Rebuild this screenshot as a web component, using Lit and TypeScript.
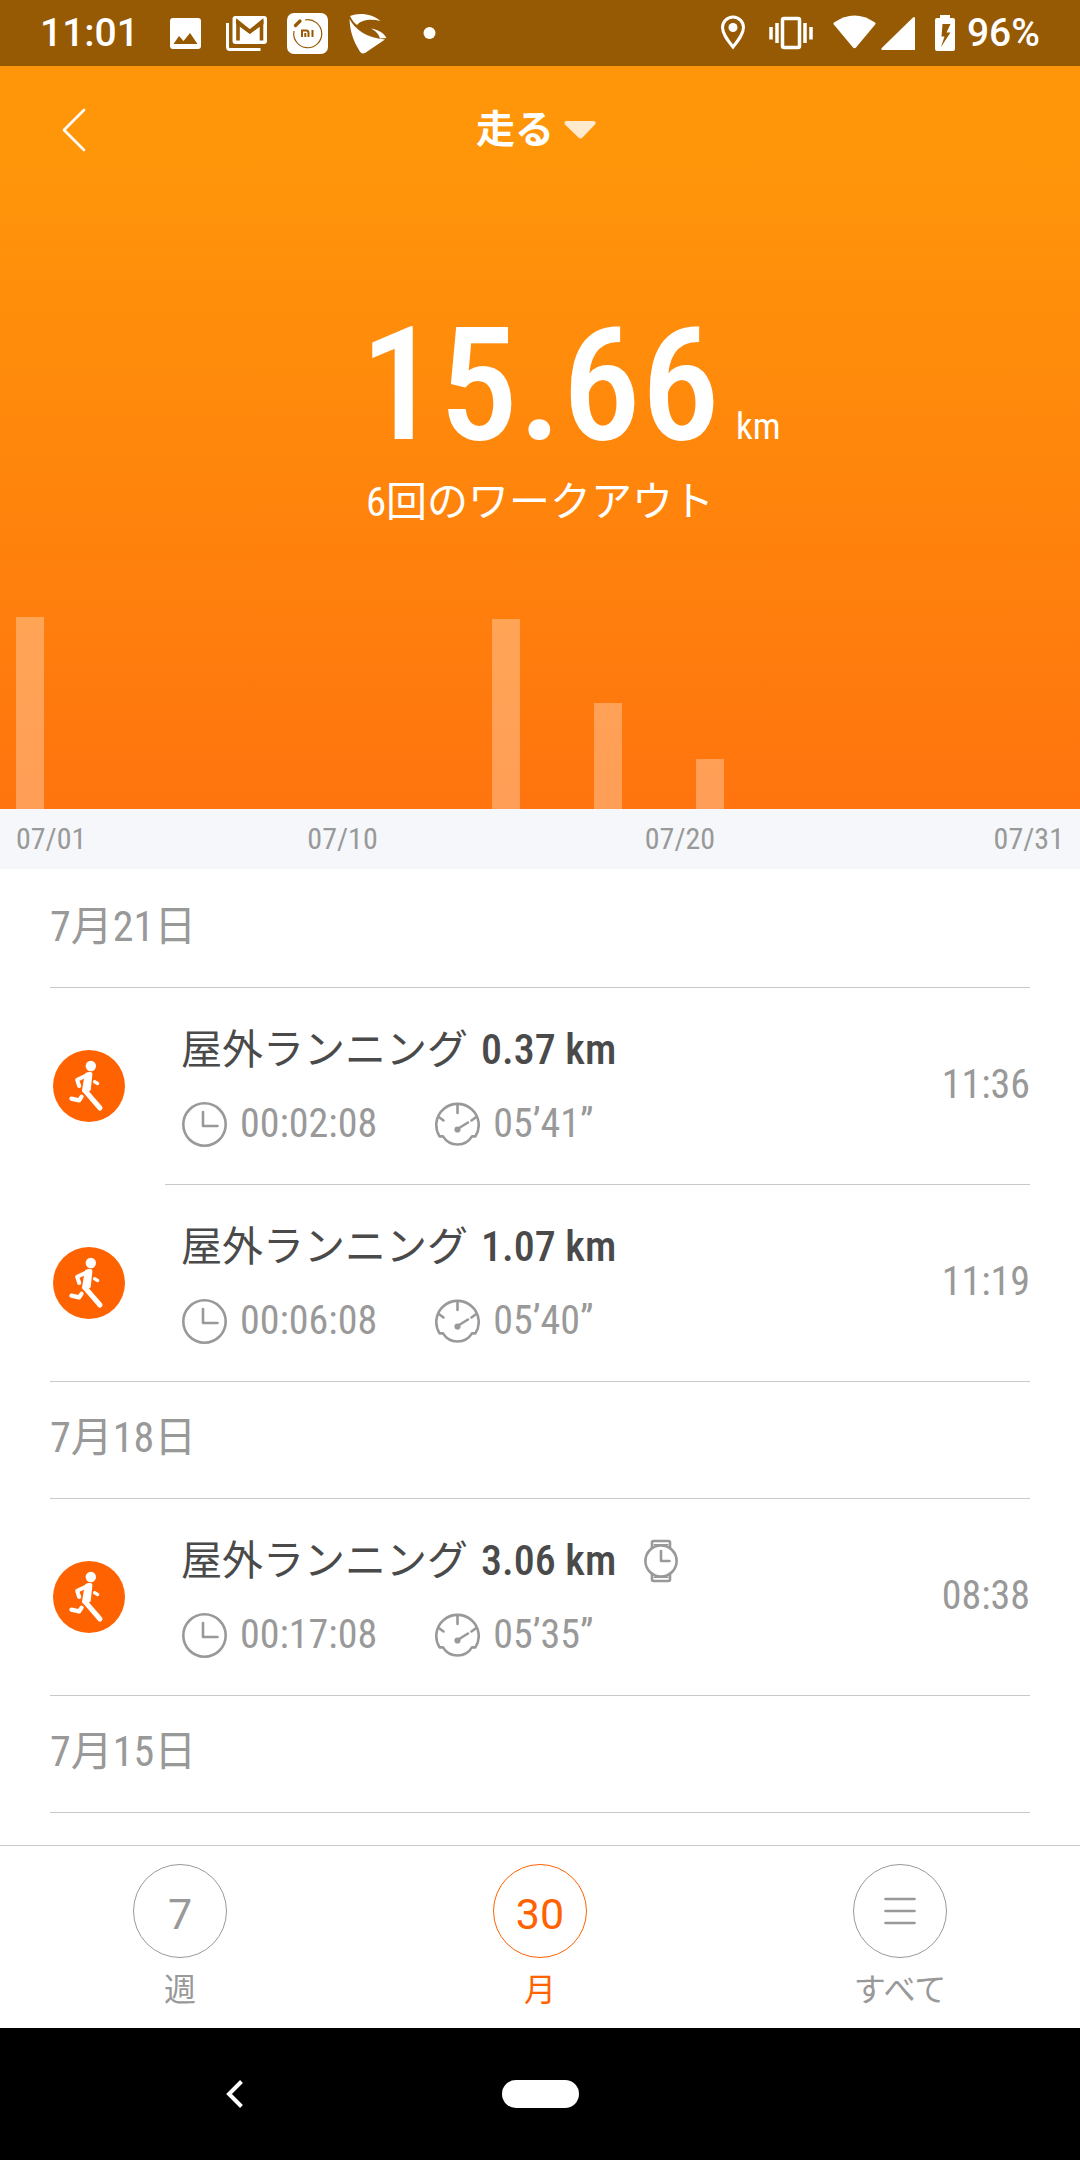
import { LitElement, html, css, svg, nothing } from "lit";
import { customElement, property, state } from "lit/decorators.js";
import { classMap } from "lit/directives/class-map.js";
import { styleMap } from "lit/directives/style-map.js";

interface Workout {
  distance: string;
  duration: string;
  pace: string;
  time: string;
  watch?: boolean;
}

interface Day {
  month: string;
  day: string;
  workouts: Workout[];
}

const DAYS: Day[] = [
  {
    month: "7",
    day: "21",
    workouts: [
      { distance: "0.37", duration: "00:02:08", pace: "05’41”", time: "11:36" },
      { distance: "1.07", duration: "00:06:08", pace: "05’40”", time: "11:19" },
    ],
  },
  {
    month: "7",
    day: "18",
    workouts: [
      { distance: "3.06", duration: "00:17:08", pace: "05’35”", time: "08:38", watch: true },
    ],
  },
  { month: "7", day: "15", workouts: [] },
];

// Share of the tallest bar, by day of the month.
const BARS: Record<number, number> = { 1: 100, 15: 99, 18: 55, 21: 26 };

const runnerIcon = html`<svg class="runner" viewBox="0 0 72 72" aria-hidden="true">
  <circle cx="36" cy="36" r="36" fill="#ff6200" />
  <g fill="none" stroke="#fff" stroke-linecap="round" stroke-linejoin="round">
    <circle cx="37.8" cy="16" r="5.2" fill="#fff" stroke="none" />
    <path d="M36.5 24 24.2 29.8 26.2 36.2" stroke-width="4" stroke-linecap="butt" />
    <path d="M26.2 35.4v.6" stroke-width="4" />
    <path d="M34 24.5 37.4 24 35.8 39.4 31 40.6 32.6 31Z" fill="#fff" stroke-width="4" />
    <path d="M41.6 31.8 44.6 33.4" stroke-width="3.4" />
    <path d="M32.6 41.4 47 58" stroke-width="5" />
    <path d="M18.4 48.6 26 50.4 28.6 46.8" stroke-width="4.2" />
  </g>
</svg>`;

const clockIcon = html`<svg class="metric-icon" viewBox="0 0 46 46" aria-hidden="true">
  <g fill="none" stroke="#999" stroke-width="2.6" stroke-linecap="round" stroke-linejoin="round">
    <circle cx="23.5" cy="23.5" r="21.2" />
    <path d="M22 11V25H36.500" />
  </g>
</svg>`;

const paceIcon = html`<svg class="metric-icon" viewBox="0 0 46 46" aria-hidden="true">
  <g fill="none" stroke="#999" stroke-width="2.6" stroke-linecap="round" stroke-linejoin="round">
    <path d="M9 35.400H5.600A21.200 21.200 0 1 1 41.400 35.400H38A17 17 0 0 1 9 35.400Z" />
    <path d="M23.500 3V12M5.500 16.500 9.500 19.500M41.500 16.500 37.500 19.500" />
    <path d="M23.500 28 34 21.500" />
    <circle cx="23.500" cy="28.500" r="1.800" fill="#999" />
  </g>
</svg>`;

const watchIcon = html`<svg class="watch" viewBox="0 0 36 44" role="img" aria-label="ウォッチ">
  <g fill="none" stroke="#999" stroke-width="2.6" stroke-linejoin="round" stroke-linecap="round">
    <circle cx="18" cy="22" r="15.6" />
    <path d="M9 9.200V3.500Q9 2 10.500 2H25.500Q27 2 27 3.500V9.200" />
    <path d="M9 34.800V40.500Q9 42 10.500 42H25.500Q27 42 27 40.500V34.800" />
    <path d="M11 5.500H25M11 38.500H25" stroke-width="1.200" />
    <path d="M18 12V22H26.500" />
  </g>
</svg>`;

@customElement("status-bar")
export class StatusBar extends LitElement {
  static styles = css`
    :host {
      display: flex;
      align-items: center;
      justify-content: space-between;
      height: 66px;
      padding: 0 40px;
      background: #965904;
      color: #fff;
      font: 500 39px/66px Roboto, "Liberation Sans", sans-serif;
    }
    .left,
    .right,
    .radio {
      display: flex;
      align-items: center;
    }
    .left {
      gap: 16px;
    }
    .clock {
      margin-right: 8px;
    }
    .right {
      gap: 20px;
    }
    .radio {
      gap: 5px;
    }
    .power {
      display: flex;
      align-items: center;
      gap: 12px;
    }
    svg {
      display: block;
      height: 44px;
    }
    .app {
      width: 45px;
    }
    .place {
      width: 32px;
    }
    .vibrate {
      width: 44px;
    }
    .wifi {
      width: 43px;
    }
    .cell {
      width: 34px;
    }
    .battery {
      width: 20px;
    }
  `;

  render() {
    return html`
      <div class="left">
        <span class="clock">11:01</span>
        <svg class="app" viewBox="0 0 45 44" aria-hidden="true">
          <path fill="#fff" fill-rule="evenodd" d="M10 7H35Q38 7 38 10V35Q38 38 35 38H10Q7 38 7 35V10Q7 7 10 7ZM10.500 33H34.500L27 22 20.500 30 16 25Z" />
        </svg>
        <svg class="app" viewBox="0 0 45 44" aria-hidden="true">
          <path fill="none" stroke="#fff" stroke-width="3" d="M3.500 12V36Q3.500 38.500 6 38.500H36.500" />
          <rect x="8.500" y="5" width="34.500" height="28" rx="3" fill="#fff" />
          <path fill="none" stroke="#965904" stroke-width="3.600" d="M14 29.500V11L25.800 20.500 37.500 11V29.500" />
          <path fill="#965904" d="M12 8.500 25.800 19 39.500 8.500V13L25.800 23 12 13Z" />
        </svg>
        <svg class="app" viewBox="0 0 45 44" aria-hidden="true">
          <rect x="2" y="2" width="41" height="41" rx="7" fill="#fff" />
          <g fill="none" stroke="#965904">
            <path stroke-width="1.200" d="M20 9A14 14 0 1 1 9 20" />
            <path stroke-width="3.200" stroke-linecap="round" d="M10.500 14.500 15 10" />
            <path stroke-width="2" d="M17 26V19.500H21.500Q23.500 19.500 23.500 22V26M20.300 22V26M27.500 19V26" />
          </g>
        </svg>
        <svg class="app" viewBox="0 0 45 44" aria-hidden="true">
          <path fill="#fff" d="M4 5C13 1 27 3 34.500 10 26 8 16 8 11 14 8 12 6 9 4 5Z" />
          <path fill="#fff" d="M3.500 8C9 18 20 27 39 28.500L19 42C16 43 14.500 42 13 39 7 29 4 20 3.500 8Z" />
          <path fill="#fff" d="M25 17.500C32 18.500 38 22 40.500 27L34 27.500C33 23 29.500 20 25 17.500Z" />
        </svg>
        <svg class="app" viewBox="0 0 45 44" aria-hidden="true">
          <circle cx="22.500" cy="22" r="6" fill="#fff" />
        </svg>
      </div>
      <div class="right">
        <svg class="place" viewBox="0 0 32 44" aria-hidden="true">
          <path fill="none" stroke="#fff" stroke-width="3" d="M16 36C10 28.500 5.500 22.500 5.500 16.500A10.500 10.500 0 0 1 26.500 16.500C26.500 22.500 22 28.500 16 36Z" />
          <circle cx="16" cy="16.500" r="4.500" fill="#fff" />
        </svg>
        <svg class="vibrate" viewBox="0 0 44 44" aria-hidden="true">
          <rect x="13.500" y="7.500" width="17" height="29" rx="1.500" fill="none" stroke="#fff" stroke-width="3.500" />
          <path stroke="#fff" stroke-width="3.500" d="M2 16V28.500M8 12V32M36 12V32M42 16V28.500" />
        </svg>
        <div class="radio">
          <svg class="wifi" viewBox="0 0 43 44" aria-hidden="true">
            <path fill="#fff" d="M.8 13.500Q0 12.500 1 11.500 21.500-2.500 42 11.500 43 12.500 42.200 13.500L23 36.500Q21.500 38 20 36.500Z" />
          </svg>
          <svg class="cell" viewBox="0 0 34 44" aria-hidden="true">
            <path fill="#fff" d="M32 6.500Q34 5 34 7.500V39H2Q-1 39 1 36.800Z" />
          </svg>
        </div>
        <div class="power">
          <svg class="battery" viewBox="0 0 20 44" aria-hidden="true">
            <path fill="#fff" fill-rule="evenodd" d="M5 4H15V7H18Q20 7 20 9V38Q20 40 18 40H2Q0 40 0 38V9Q0 7 2 7H5ZM7.500 13 6.500 25.500H9.500L6 36 15.500 21.500H11.500L15.500 13Z" />
          </svg>
          <span>96%</span>
        </div>
      </div>
    `;
  }
}

@customElement("month-chart")
export class MonthChart extends LitElement {
  static styles = css`
    :host {
      display: block;
    }
    .bars {
      display: grid;
      grid-template-columns: repeat(31, 1fr);
      align-items: end;
      gap: 6px;
      height: 192px;
      padding: 0 16px;
    }
    .bar {
      background: rgba(255, 255, 255, 0.3);
    }
  `;

  render() {
    const days = Array.from({ length: 31 }, (_, i) => i + 1);
    return html`<div class="bars">
      ${days.map(
        (d) => html`<div class="bar" style=${styleMap({ height: `${BARS[d] ?? 0}%` })}></div>`
      )}
    </div>`;
  }
}

@customElement("workout-row")
export class WorkoutRow extends LitElement {
  @property({ attribute: false }) workout!: Workout;

  static styles = css`
    :host {
      display: flex;
      align-items: stretch;
      padding-left: 3px;
      color: #999;
      font: 400 40px/48px "Roboto Condensed", Roboto, "Noto Sans CJK JP", sans-serif;
    }
    .runner {
      display: block;
      flex: none;
      align-self: center;
      width: 72px;
      height: 72px;
      margin: 0 40px 2px 0;
    }
    .body {
      flex: 1;
      display: flex;
      align-items: center;
      justify-content: space-between;
      padding: 34px 0 36px 16px;
      border-bottom: 1px solid var(--row-line, #c9c9c9);
    }
    .info {
      display: flex;
      flex-direction: column;
      gap: 22px;
    }
    .title {
      display: flex;
      align-items: center;
      gap: 27px;
      margin: 0;
      color: #4a4a4a;
      font-weight: 400;
      font-size: 41px;
      line-height: 56px;
    }
    .distance {
      margin-left: 13px;
      font-weight: 500;
      font-size: 42px;
    }
    .watch {
      width: 36px;
      height: 44px;
    }
    .metrics {
      display: flex;
      gap: 57px;
    }
    .metric {
      display: flex;
      align-items: center;
      gap: 13px;
    }
    .metric-icon {
      width: 46px;
      height: 46px;
    }
  `;

  render() {
    const w = this.workout;
    return html`
      ${runnerIcon}
      <div class="body">
        <div class="info">
          <h3 class="title">
            <span>屋外ランニング<span class="distance">${w.distance} km</span></span>
            ${w.watch ? watchIcon : nothing}
          </h3>
          <div class="metrics">
            <span class="metric">${clockIcon}<span>${w.duration}</span></span>
            <span class="metric">${paceIcon}<span>${w.pace}</span></span>
          </div>
        </div>
        <time>${w.time}</time>
      </div>
    `;
  }
}

@customElement("app-root")
export class AppRoot extends LitElement {
  @state() private period = "month";

  static styles = css`
    :host {
      display: flex;
      flex-direction: column;
      min-height: 100vh;
      background: #fff;
      font-family: "Roboto Condensed", Roboto, "Noto Sans CJK JP", sans-serif;
    }
    button {
      margin: 0;
      padding: 0;
      border: 0;
      background: none;
      color: inherit;
      font: inherit;
      cursor: pointer;
    }
    svg {
      display: block;
    }
    .hero {
      background: linear-gradient(#ff960a, #ff960a 12%, #ff740e);
      color: #fff;
    }
    .appbar {
      display: grid;
      grid-template-columns: 1fr auto 1fr;
      align-items: center;
      height: 128px;
      padding: 0 48px;
    }
    .back,
    .back svg {
      width: 52px;
      height: 52px;
    }
    .picker {
      display: flex;
      align-items: center;
      gap: 10px;
      font-weight: 700;
      font-size: 39px;
      line-height: 56px;
    }
    .picker svg {
      width: 40px;
      height: 20px;
    }
    .total {
      display: grid;
      grid-template-columns: 1fr auto 1fr;
      align-items: baseline;
      column-gap: 16px;
      margin-top: 111px;
      line-height: 160px;
    }
    .value {
      grid-column: 2;
      font-weight: 500;
      font-size: 158px;
    }
    .unit {
      font-size: 37px;
      line-height: 40px;
    }
    .count {
      margin: 7px 0 85px;
      text-align: center;
      font-size: 41px;
      line-height: 60px;
    }
    .axis {
      display: grid;
      grid-template-columns: 139fr 161fr 200fr;
      padding: 0 16px;
      background: #f5f7fa;
      color: #999;
      font-size: 30px;
      line-height: 60px;
    }
    .axis-end {
      display: flex;
      justify-content: space-between;
    }
    .list {
      flex: 1;
      padding: 2px 50px 0;
    }
    .date {
      margin: 0;
      padding: 28px 0 32px;
      border-bottom: 1px solid #c9c9c9;
      color: #999;
      font-weight: 400;
      font-size: 42px;
      line-height: 56px;
    }
    .items {
      margin: 0;
      padding: 0;
      list-style: none;
    }
    .item:last-child {
      --row-line: transparent;
      background: linear-gradient(#c9c9c9, #c9c9c9) bottom / 100% 1px no-repeat;
    }
    .tabs {
      display: grid;
      grid-template-columns: repeat(3, 1fr);
      border-top: 1px solid #c9c9c9;
      background: #fff;
    }
    .tab {
      display: flex;
      flex-direction: column;
      align-items: center;
      gap: 8px;
      padding: 18px 0 14px;
      color: #999;
      font-size: 32px;
      line-height: 48px;
    }
    .tab.active {
      color: #ff6200;
    }
    .disc {
      display: flex;
      align-items: center;
      justify-content: center;
      box-sizing: border-box;
      width: 94px;
      height: 94px;
      border: 1px solid currentColor;
      border-radius: 50%;
    }
    .number {
      padding-top: 5px;
      font-family: Roboto, sans-serif;
      font-size: 43px;
    }
    .disc svg {
      width: 32px;
      height: 28px;
    }
    .system {
      display: grid;
      grid-template-columns: 1fr auto 1fr;
      align-items: center;
      height: 132px;
      background: #000;
    }
    .system-back {
      justify-self: center;
      margin-right: 32px;
    }
    .system-back svg {
      width: 32px;
      height: 32px;
    }
    .home {
      width: 77px;
      height: 28px;
      border-radius: 14px;
      background: #fff;
    }
  `;

  private tab(id: string, disc: unknown, label: string) {
    const active = this.period === id;
    return html`<button
      class=${classMap({ tab: true, active })}
      aria-pressed=${active ? "true" : "false"}
      @click=${() => (this.period = id)}
    >
      <span class="disc">${disc}</span><span>${label}</span>
    </button>`;
  }

  render() {
    const menu = html`<svg viewBox="0 0 32 28" aria-hidden="true">
      ${svg`<path d="M1.500 2H30.500M1.500 14H30.500M1.500 26H30.500" stroke="currentColor" stroke-width="2.600" stroke-linecap="round" />`}
    </svg>`;
    return html`
      <status-bar></status-bar>
      <header class="hero">
        <div class="appbar">
          <button class="back" aria-label="戻る">
            <svg viewBox="0 0 52 52" aria-hidden="true">
              <path d="M36 6 16 26 36 46" fill="none" stroke="#fff" stroke-width="2.600" stroke-linecap="round" stroke-linejoin="round" />
            </svg>
          </button>
          <button class="picker">
            <span>走る</span>
            <svg viewBox="0 0 40 20" aria-hidden="true">
              <path d="M2.500 1H29.500Q33 1.500 31 4.500L18.500 17.500Q16.500 19.500 14.500 17.500L1 4.500Q-.5 1.500 2.500 1Z" fill="#fff" fill-opacity=".8" />
            </svg>
          </button>
        </div>
        <div class="total">
          <span class="value">15.66</span>
          <span class="unit">km</span>
        </div>
        <p class="count">6回のワークアウト</p>
        <month-chart></month-chart>
      </header>
      <div class="axis">
        <span>07/01</span>
        <span>07/10</span>
        <span class="axis-end"><span>07/20</span><span>07/31</span></span>
      </div>
      <main class="list">
        ${DAYS.map(
          (d) => html`<section>
            <h2 class="date">${d.month}月${d.day}日</h2>
            <ul class="items">
              ${d.workouts.map(
                (w) => html`<li class="item"><workout-row .workout=${w}></workout-row></li>`
              )}
            </ul>
          </section>`
        )}
      </main>
      <nav class="tabs">
        ${this.tab("week", html`<span class="number">7</span>`, "週")}
        ${this.tab("month", html`<span class="number">30</span>`, "月")}
        ${this.tab("all", menu, "すべて")}
      </nav>
      <footer class="system">
        <button class="system-back" aria-label="戻る">
          <svg viewBox="0 0 32 32" aria-hidden="true">
            <path d="M22.500 3.500 10 16 22.500 28.500" fill="none" stroke="#fff" stroke-width="4" />
          </svg>
        </button>
        <button class="home" aria-label="ホーム"></button>
      </footer>
    `;
  }
}
